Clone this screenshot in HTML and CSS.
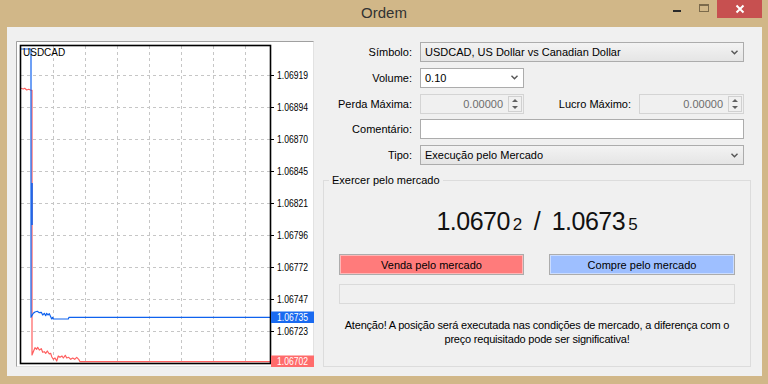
FILE: index.html
```html
<!DOCTYPE html>
<html>
<head>
  <meta charset="UTF-8">
  <title>Ordem</title>
  <link rel="stylesheet" href="styles.css">
</head>
<body>
  <div class="window">
    <div class="titlebar">
      <span></span>
      <div class="title">Ordem</div>
      <div class="controls">
        <span class="ctl-min"></span>
        <span class="ctl-max"></span>
        <span class="ctl-close">
          <svg width="10" height="10" viewBox="0 0 10 10" fill="none">
            <path d="M1.5 1.5l7 7m0-7l-7 7" stroke="#fff" stroke-width="2"/>
          </svg>
        </span>
      </div>
    </div>

    <div class="client">
      <!-- Tick chart -->
      <div class="chart">
        <svg width="298" height="326" viewBox="16 41 298 326">
          <rect x="16.5" y="41.5" width="297" height="325" fill="#fff" stroke="#e2e2e2"/>
          <path d="M16.5 366.5V41.5H313.5" stroke="#a0a0a0" fill="none"/>
          <g stroke="#c6c6c6" stroke-dasharray="3 3" fill="none">
            <path d="M53.5 46V362M85.5 46V362M117.5 46V362M149.5 46V362M181.5 46V362M213.5 46V362M245.5 46V362"/>
            <path d="M21 75.5H270M21 107.5H270M21 139.5H270M21 171.5H270M21 203.5H270M21 235.5H270M21 267.5H270M21 299.5H270M21 331.5H270"/>
          </g>
          <g fill="none" stroke-width="1.2" stroke-linejoin="round">
            <polyline stroke="#ff5f5f" points="21,88.3 23.3,89 24.7,88.3 26.7,90 28.7,89.3 31,90.3 32,90.3 32,355 33.3,351.7 35,347.7 36.7,349.3 37.7,347.3 39.3,350 41.3,348.7 42.7,352.3 44.3,351.7 45.7,353.3 47.3,351 49.3,354 50.7,353.3 51.7,356.7 53.3,359.3 55,358 56.7,361 58.3,356 60,357.3 62,356 63.3,358 65.3,355.3 66.7,358 68.7,357.3 70.7,359.3 72.7,358 74.7,359.3 76.7,357.3 78.7,359.3 80,361.7 270,361.7"/>
            <polyline stroke="#0f62ee" points="21,49 31,49 31,317.3 33.3,313.3 35,312 37.3,311.3 39.3,312.7 41.3,312.3 42.7,315 44.3,313.3 45.7,315.7 46.7,313.3 48,315 49.3,313.7 50.7,316.7 51.7,319 52.7,317.3 53.3,319 68.3,319 69,317.3 270,317.3"/>
            <path d="M32 183V225" stroke="#0f62ee" stroke-width="1.6"/>
          </g>
          <rect x="20.5" y="45.5" width="250" height="318" fill="none" stroke="#000" stroke-width="1.6"/>
          <path d="M270 75.5h4M270 107.5h4M270 139.5h4M270 171.5h4M270 203.5h4M270 235.5h4M270 267.5h4M270 299.5h4M270 331.5h4" stroke="#000"/>
          <text class="sym" x="23" y="56">USDCAD</text>
          <g class="axis">
            <text x="277" y="79" textLength="31" lengthAdjust="spacingAndGlyphs">1.06919</text>
            <text x="277" y="111" textLength="31" lengthAdjust="spacingAndGlyphs">1.06894</text>
            <text x="277" y="143" textLength="31" lengthAdjust="spacingAndGlyphs">1.06870</text>
            <text x="277" y="175" textLength="31" lengthAdjust="spacingAndGlyphs">1.06845</text>
            <text x="277" y="207" textLength="31" lengthAdjust="spacingAndGlyphs">1.06821</text>
            <text x="277" y="239" textLength="31" lengthAdjust="spacingAndGlyphs">1.06796</text>
            <text x="277" y="271" textLength="31" lengthAdjust="spacingAndGlyphs">1.06772</text>
            <text x="277" y="303" textLength="31" lengthAdjust="spacingAndGlyphs">1.06747</text>
            <text x="277" y="335" textLength="31" lengthAdjust="spacingAndGlyphs">1.06723</text>
          </g>
          <rect x="271" y="311.5" width="43" height="11.5" fill="#1a6af0"/>
          <text class="tag" x="277" y="321" textLength="31" lengthAdjust="spacingAndGlyphs">1.06735</text>
          <rect x="271" y="355.5" width="43" height="11.5" fill="#ff6b6b"/>
          <text class="tag" x="277" y="365" textLength="31" lengthAdjust="spacingAndGlyphs">1.06702</text>
        </svg>
      </div>

      <div class="order">
        <div class="form">
          <label class="label">Símbolo:</label>
          <div class="field select">
            <span>USDCAD, US Dollar vs Canadian Dollar</span>
            <svg class="chev" width="7" height="5" viewBox="0 0 7 5"><path d="M.5 .8L3.5 3.8 6.5 .8" stroke="#555" stroke-width="1.4" fill="none"/></svg>
          </div>

          <label class="label">Volume:</label>
          <div class="field w-small">
            <span>0.10</span>
            <svg class="chev" width="7" height="5" viewBox="0 0 7 5"><path d="M.5 .8L3.5 3.8 6.5 .8" stroke="#555" stroke-width="1.4" fill="none"/></svg>
          </div>

          <label class="label">Perda Máxima:</label>
          <div class="pair">
            <div class="field disabled w-small">
              <span>0.00000</span>
              <span class="spin"><i class="up"></i><i class="down"></i></span>
            </div>
            <label class="label pair-label">Lucro Máximo:</label>
            <div class="field disabled w-profit">
              <span>0.00000</span>
              <span class="spin"><i class="up"></i><i class="down"></i></span>
            </div>
          </div>

          <label class="label">Comentário:</label>
          <div class="field"></div>

          <label class="label">Tipo:</label>
          <div class="field select">
            <span>Execução pelo Mercado</span>
            <svg class="chev" width="7" height="5" viewBox="0 0 7 5"><path d="M.5 .8L3.5 3.8 6.5 .8" stroke="#555" stroke-width="1.4" fill="none"/></svg>
          </div>
        </div>

        <fieldset class="market">
          <legend>Exercer pelo mercado</legend>
          <div class="price">1.0670<small>2</small> / 1.0673<small>5</small></div>
          <div class="actions">
            <button class="btn sell">Venda pelo mercado</button>
            <button class="btn buy">Compre pelo mercado</button>
          </div>
          <div class="progress"></div>
          <div class="warning">Atenção! A posição será executada nas condições de mercado, a diferença com o<br>preço requisitado pode ser significativa!</div>
        </fieldset>
      </div>
    </div>
  </div>
</body>
</html>
```

FILE: styles.css
```css
* {
  box-sizing: border-box;
}

body {
  margin: 0;
  background: #d1b788;
  font-family: 'Liberation Sans', Arial, sans-serif;
  font-size: 11px;
  color: #000;
}

.window {
  width: 768px;
  height: 384px;
  display: flex;
  flex-direction: column;
  background: #d1b788;
}

/* Title bar */
.titlebar {
  height: 27px;
  display: grid;
  grid-template-columns: 1fr auto 1fr;
}

.title {
  font-size: 15px;
  line-height: 25px;
  color: #333;
}

.controls {
  display: flex;
  justify-content: flex-end;
  align-items: flex-start;
}

.ctl-min {
  width: 8px;
  height: 2px;
  margin: 10px 18px 0 0;
  background: #2a2a2a;
}

.ctl-max {
  width: 10px;
  height: 8px;
  margin: 4px 8px 0 0;
  border: 1px solid #7b6a4b;
  border-top-width: 2px;
}

.ctl-close {
  width: 45px;
  height: 18px;
  margin-right: 6px;
  background: #c75050;
  display: flex;
  align-items: center;
  justify-content: center;
}

/* Client area */
.client {
  flex: 1;
  margin: 0 6px 8px 7px;
  background: #f0f0f0;
  display: flex;
  align-items: flex-start;
}

.chart {
  margin: 14px 0 0 9px;
  width: 298px;
  height: 326px;
}

.chart svg {
  display: block;
}

.chart text {
  font-family: 'Liberation Sans', Arial, sans-serif;
}

.chart .sym {
  font-size: 10px;
}

.chart .axis text {
  font-size: 10.5px;
}

.chart .tag {
  font-size: 10.5px;
  fill: #fff;
}

.order {
  margin: 15px 0 0 9px;
  width: 428px;
}

/* Form rows */
.form {
  display: grid;
  grid-template-columns: 89px 1fr;
  column-gap: 8px;
  row-gap: 5.75px;
  padding-right: 7px;
}

.label {
  text-align: right;
  line-height: 20px;
  white-space: nowrap;
}

.field {
  height: 20px;
  padding: 0 4px;
  border: 1px solid #acacac;
  background: #fff;
  display: flex;
  align-items: center;
  justify-content: space-between;
}

.select {
  background: linear-gradient(#f3f3f3, #e5e5e5);
}

.chev {
  margin-right: 1px;
}

.w-small {
  width: 104px;
}

.w-profit {
  width: 105px;
}

.pair {
  display: flex;
}

.pair-label {
  flex: 1;
  padding-right: 8px;
}

.field.disabled {
  padding-right: 1px;
  border-color: #d4d4d4;
  background: #f0f0f0;
  color: #6d6d6d;
  justify-content: flex-end;
}

.spin {
  width: 14px;
  height: 16px;
  margin-left: 5px;
  border: 1px solid #d0d0d0;
  display: flex;
  flex-direction: column;
  align-items: center;
  justify-content: space-around;
}

.spin i {
  width: 0;
  height: 0;
  border-left: 3px solid transparent;
  border-right: 3px solid transparent;
}

.spin .up {
  border-bottom: 3px solid #606060;
}

.spin .down {
  border-top: 3px solid #606060;
}

/* Market execution group */
.market {
  margin: 8px 0 0;
  padding: 0 15px 20px;
  min-width: 0;
  border: 1px solid #dcdcdc;
}

.market legend {
  margin-left: -10px;
  padding: 0 3px;
  line-height: 14px;
}

.price {
  height: 30px;
  margin-top: 19px;
  text-align: center;
  font-size: 25px;
  line-height: 30px;
  letter-spacing: -0.5px;
  word-spacing: 5px;
  color: #111;
}

.price small {
  margin-left: 3px;
  font-size: 17px;
  line-height: 1;
  letter-spacing: 0;
}

.actions {
  margin-top: 18px;
  display: flex;
  justify-content: space-between;
}

.btn {
  height: 21px;
  padding: 0;
  border: 1px solid #acacac;
  box-shadow: inset 0 0 0 1px rgba(255, 255, 255, 0.45);
  font-family: inherit;
  font-size: 11px;
  color: #000;
}

.sell {
  width: 185px;
  background: #ff7b7b;
}

.buy {
  width: 186px;
  background: #9ebfff;
}

.progress {
  height: 20px;
  margin-top: 9px;
  border: 1px solid #dadada;
  background: #f0f0f0;
}

.warning {
  margin-top: 14px;
  text-align: center;
  line-height: 14px;
  letter-spacing: -0.2px;
  white-space: nowrap;
}
```
